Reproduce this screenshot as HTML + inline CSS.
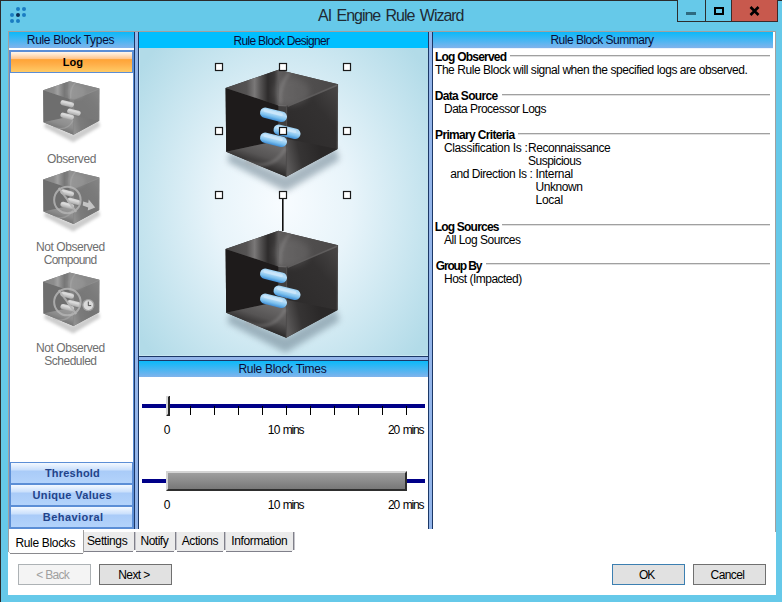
<!DOCTYPE html>
<html><head><meta charset="utf-8">
<style>
*{margin:0;padding:0;box-sizing:border-box}
html,body{width:782px;height:602px;overflow:hidden}
body{position:relative;background:#66C9E9;font-family:"Liberation Sans",sans-serif;font-size:11px;color:#000}
.a{position:absolute}
.t{position:absolute;white-space:nowrap;line-height:20px}
.hdr{position:absolute;height:16px;background:linear-gradient(#0BB9F9,#80B3EC)}
.navy{background:#1C3867}
.lt{background:#93B5EA}
.sep{position:absolute;height:2px;border-top:1px solid #A0A0A0;border-bottom:1px solid #E0E0E0}
.btn{position:absolute;height:21px;border:1px solid #707070;background:#E1E1E1;text-align:center;line-height:19px;font-size:11px}
.tab{position:absolute;top:532px;height:20px;background:#EBEBEB;border-right:2px solid #8A8A8E;border-bottom:1px solid #8A8A8E}
.bb{position:absolute;left:10px;width:123px;height:22px;border:1px solid #5B8ED6;background:linear-gradient(#F4F9FF 0%,#C9DFFC 35%,#A9CBF8 40%,#B3D3FB 100%);color:#29508F;font-weight:bold;text-align:center;line-height:20px}
</style></head><body>

<svg width="0" height="0" style="position:absolute">
<defs>
 <filter id="blur3" x="-30%" y="-30%" width="160%" height="160%"><feGaussianBlur stdDeviation="3"/></filter>
 <filter id="gray" x="-20%" y="-20%" width="140%" height="140%" color-interpolation-filters="sRGB"><feColorMatrix type="matrix" values="0.117 0.393 0.040 0 0.37 0.117 0.393 0.040 0 0.37 0.117 0.393 0.040 0 0.37 0 0 0 1 0"/></filter>
 <filter id="blur1" x="-30%" y="-30%" width="160%" height="160%"><feGaussianBlur stdDeviation="1.5"/></filter>
 <linearGradient id="gTopL" x1="0" y1="0" x2="1" y2="0">
  <stop offset="0" stop-color="#4A4848"/><stop offset="0.4" stop-color="#555353"/><stop offset="0.55" stop-color="#7A7878"/><stop offset="0.66" stop-color="#565454"/><stop offset="0.8" stop-color="#2E2C2C"/><stop offset="0.92" stop-color="#3A3838"/><stop offset="1" stop-color="#5A5858"/>
 </linearGradient>
 <linearGradient id="gTopR" x1="0" y1="0" x2="1" y2="0">
  <stop offset="0" stop-color="#5E5C5C"/><stop offset="0.35" stop-color="#525050"/><stop offset="1" stop-color="#4A4848"/>
 </linearGradient>
 <linearGradient id="gRight" gradientUnits="userSpaceOnUse" x1="62" y1="60" x2="110" y2="20">
  <stop offset="0" stop-color="#2E2C2C"/><stop offset="0.6" stop-color="#333131"/><stop offset="1" stop-color="#454343"/>
 </linearGradient>
 <linearGradient id="gFloorL" gradientUnits="userSpaceOnUse" x1="38" y1="72" x2="30" y2="96">
  <stop offset="0" stop-color="#6A6868"/><stop offset="0.55" stop-color="#565454"/><stop offset="1" stop-color="#2E2C2C"/>
 </linearGradient>
 <linearGradient id="gFloorR" gradientUnits="userSpaceOnUse" x1="61" y1="90" x2="95" y2="82">
  <stop offset="0" stop-color="#5A5858"/><stop offset="0.4" stop-color="#363434"/><stop offset="1" stop-color="#2A2828"/>
 </linearGradient>
 <linearGradient id="gPill" x1="0" y1="0" x2="0" y2="1">
  <stop offset="0" stop-color="#9ED2F4"/><stop offset="0.35" stop-color="#B8DEF8"/><stop offset="0.7" stop-color="#7CC0EE"/><stop offset="1" stop-color="#3F8ED6"/>
 </linearGradient>
 <g id="cubeD">
  <path d="M4 82 L60 106 L110 78 L114 90 L60 122 L2 92 Z" fill="#6A808E" opacity="0.55" filter="url(#blur3)"/>
  <path d="M52.8 0 L112.5 14.4 L112 79.3 L60.6 107 L0.6 82 L0 18.2 Z" fill="url(#gRight)"/>
  <path d="M0 18.2 L52.8 35.6 L52.8 69 L60.6 69 L0.6 82 Z" fill="#1E1B1B"/>
  <path d="M0 18.2 L52.8 0 L52.8 35.6 Z" fill="url(#gTopL)"/>
  <path d="M52.8 0 L112.5 14.4 L61.4 36 L52.8 35.6 Z" fill="url(#gTopR)"/>
  <path d="M0.6 82 L60.6 69 L60.6 107 Z" fill="url(#gFloorL)"/>
  <path d="M60.6 69 L112 79.3 L60.6 107 Z" fill="url(#gFloorR)"/>
  <ellipse cx="66" cy="22" rx="18" ry="14" fill="#8A8888" opacity="0.25" filter="url(#blur3)"/>
  <path d="M111.8 15 L111.6 79" stroke="#4E4C4C" stroke-width="1"/>
  <path d="M52.8 36 L61 36.5 L61 70 L52.8 69 Z" fill="#4E4C4C" opacity="0.6"/>
  <path d="M52.8 0.5 L52.8 35.6" stroke="#5E5C5C" stroke-width="1"/>
  <path d="M52.8 35.6 L61.4 36" stroke="#6A6868" stroke-width="1.2"/>
  <path d="M61 36 L60.8 107" stroke="#4E4C4C" stroke-width="1.2"/>
  <path d="M64 3 Q53 16 55 34" fill="none" stroke="#9A9898" stroke-width="3" opacity="0.35" filter="url(#blur1)"/>
  <path d="M20 92 Q48 102 60 78" fill="none" stroke="#9A9898" stroke-width="2.5" opacity="0.45" filter="url(#blur1)"/>
  <path d="M111.5 15.5 L62 36.5" stroke="#7A7878" stroke-width="1.5" opacity="0.55"/>
  <g transform="rotate(14 48 45)"><rect x="34.2" y="39.8" width="27.5" height="10.4" rx="5.2" fill="url(#gPill)"/><rect x="37" y="41" width="20" height="3.5" rx="1.7" fill="#E4F2FC" opacity="0.45"/></g>
  <g transform="rotate(14 61.5 62)"><rect x="47.7" y="56.8" width="27.5" height="10.4" rx="5.2" fill="url(#gPill)"/><rect x="50.5" y="58" width="20" height="3.5" rx="1.7" fill="#E4F2FC" opacity="0.45"/></g>
  <g transform="rotate(14 48 70)"><rect x="34.2" y="64.8" width="27.5" height="10.4" rx="5.2" fill="url(#gPill)"/><rect x="37" y="66" width="20" height="3.5" rx="1.7" fill="#E4F2FC" opacity="0.45"/></g>
 </g>
 <linearGradient id="iTopL" x1="0" y1="0" x2="1" y2="0">
  <stop offset="0" stop-color="#7A7A7A"/><stop offset="0.6" stop-color="#A0A0A0"/><stop offset="0.85" stop-color="#808080"/><stop offset="1" stop-color="#8A8A8A"/>
 </linearGradient>
 <g id="cubeI">
  <path d="M4 84 L60 108 L112 80 L114 94 L60 124 L2 96 Z" fill="#9A9A9A" opacity="0.6" filter="url(#blur3)"/>
  <path d="M0 18 L52.5 0 L112.5 14.4 L112 79.3 L60 106.7 L0.6 82 Z" fill="#858585"/>
  <path d="M0 18 L52.5 33.5 L60.5 35.7 L60 106.7 L0.6 82 Z" fill="#6E6E6E"/>
  <path d="M0 18 L52.5 0 L52.5 33.5 Z" fill="url(#iTopL)"/>
  <path d="M52.5 0 L112.5 14.4 L60.5 35.7 L52.5 33.5 Z" fill="#8C8C8C"/>
  <path d="M0.6 82 L60.5 66 L60 106.7 Z" fill="#8A8A8A"/>
  <path d="M60.5 66 L112 79.3 L60 106.7 Z" fill="#7C7C7C"/>
 </g>
 <g id="pillsI">
  <g transform="rotate(12 48 45)"><rect x="34" y="40" width="28" height="10" rx="5" fill="#C4C4C4"/></g>
  <g transform="rotate(12 62 62)"><rect x="48" y="57" width="28" height="10" rx="5" fill="#C4C4C4"/></g>
  <g transform="rotate(12 48 70)"><rect x="34" y="65" width="28" height="10" rx="5" fill="#C4C4C4"/></g>
 </g>
</defs></svg>

<!-- window frame lines -->
<div class="a" style="left:0;top:0;width:782px;height:1px;background:#2B2B2B"></div>
<div class="a" style="left:0;top:0;width:1px;height:602px;background:#2B2B2B"></div>
<!-- app icon -->
<svg class="a" style="left:0;top:0" width="40" height="30">
<g fill="#1A7CC2"><circle cx="18" cy="9" r="2"/><circle cx="24" cy="9" r="2"/><circle cx="12" cy="15" r="2"/><circle cx="24" cy="15" r="2"/><circle cx="12" cy="21" r="2"/><circle cx="18" cy="21" r="2"/></g>
<circle cx="18" cy="15" r="2" fill="#0B2F55"/>
</svg>
<!-- caption buttons -->
<div class="a" style="left:677px;top:0;width:101px;height:22px;border:1px solid #2D2D2D;border-top:none;background:#66C9E9"></div>
<div class="a" style="left:705px;top:0;width:1px;height:22px;background:#2D2D2D"></div>
<div class="a" style="left:731px;top:0;width:47px;height:22px;background:#C8594D;border:1px solid #3A2A2A;border-top:none"></div>
<div class="a" style="left:686px;top:12px;width:10px;height:3px;background:#2E6A80"></div>
<div class="a" style="left:714px;top:7px;width:10px;height:8px;border:2px solid #000"></div>
<svg class="a" style="left:749px;top:6px" width="11" height="10"><path d="M1.5 1 L9.5 9 M9.5 1 L1.5 9" stroke="#000" stroke-width="2.6"/></svg>

<!-- client -->
<div class="a" style="left:8px;top:31px;width:768px;height:564px;background:#fff"></div>
<div class="a" style="left:8px;top:31px;width:768px;height:1px;background:#A0A0A0"></div>
<div class="a" style="left:8px;top:31px;width:1px;height:521px;background:#A0A0A0"></div>
<div class="a" style="left:775px;top:31px;width:1px;height:501px;background:#A0A0A0"></div>

<!-- LEFT PANEL -->
<div class="hdr" style="left:9px;top:32px;width:125px"></div>
<div class="a" style="left:9px;top:50px;width:125px;height:479px;border:1px solid #5B8ED6;background:#fff"></div>
<div class="a" style="left:10px;top:51px;width:123px;height:22px;border:1px solid #5B8ED6;background:linear-gradient(#FFF6EC 0%,#FFE2C4 15%,#FFC68E 33%,#FFA436 38%,#FFAE48 60%,#FFCB66 100%)"></div>


<svg class="a" style="left:10px;top:73px" width="123" height="290">
 <g transform="translate(33.2 8.2) scale(0.5)" filter="url(#gray)"><use href="#cubeD"/></g>
 <g transform="translate(33.2 97.4) scale(0.5)"><g filter="url(#gray)"><use href="#cubeD"/></g>
   <circle cx="48.4" cy="59" r="26.5" fill="none" stroke="#B4B4B4" stroke-width="4" opacity="0.85"/><path d="M31 35 L66 83" stroke="#B4B4B4" stroke-width="4" opacity="0.85"/>
   <path d="M80 62 L90 65 L91 58 L104 74 L89 80 L90 74 L79 70 Z" fill="#C4C4C4"/></g>
 <g transform="translate(33.2 199.6) scale(0.5)"><g filter="url(#gray)"><use href="#cubeD"/></g>
   <circle cx="48.4" cy="59" r="26.5" fill="none" stroke="#B4B4B4" stroke-width="4" opacity="0.85"/><path d="M31 35 L66 83" stroke="#B4B4B4" stroke-width="4" opacity="0.85"/>
   <circle cx="90.2" cy="65" r="11" fill="#DADADA" stroke="#A0A0A0" stroke-width="2.5"/><path d="M90.2 58 L90.2 66 L96 66" stroke="#444" stroke-width="1.8" fill="none"/></g>
</svg>


<div class="bb" style="top:462px"></div>
<div class="bb" style="top:484px"></div>
<div class="bb" style="top:506px"></div>

<!-- splitter 1 -->
<div class="a navy" style="left:134px;top:32px;width:5px;height:497px"></div>
<div class="a lt" style="left:135px;top:32px;width:3px;height:497px"></div>

<!-- DESIGNER -->
<div class="a" style="left:139px;top:32px;width:289px;height:16px;background:#00BFFF"></div>
<div class="a" style="left:139px;top:48px;width:289px;height:308px;background:radial-gradient(ellipse 180px 220px at 144px 155px,#F8FCFF 0%,#E8F4FA 38%,#B2DBE8 100%)"></div>


<svg class="a" style="left:139px;top:48px" width="289" height="308">
 <use href="#cubeD" transform="translate(86.6 21.8)"/>
 <use href="#cubeD" transform="translate(86.6 182.8)"/>
 <rect x="143" y="147" width="1.6" height="36" fill="#111"/>
 <g fill="#fff" stroke="#1A1A1A" stroke-width="1.2">
  <rect x="76.5" y="15.5" width="7" height="7"/><rect x="140.5" y="15.5" width="7" height="7"/><rect x="204.5" y="15.5" width="7" height="7"/>
  <rect x="76.5" y="79.5" width="7" height="7"/><rect x="140.5" y="79.5" width="7" height="7"/><rect x="204.5" y="79.5" width="7" height="7"/>
  <rect x="76.5" y="143.5" width="7" height="7"/><rect x="140.5" y="143.5" width="7" height="7"/><rect x="204.5" y="143.5" width="7" height="7"/>
 </g>
</svg>

<div class="a" style="left:139px;top:48px;width:1px;height:308px;background:#C6E6F0"></div><div class="a" style="left:139px;top:355px;width:289px;height:1px;background:#C6E6F0"></div>
<!-- h splitter -->
<div class="a navy" style="left:139px;top:356px;width:289px;height:5px"></div>
<div class="a lt" style="left:139px;top:357px;width:289px;height:3px"></div>

<!-- TIMES -->
<div class="hdr" style="left:139px;top:361px;width:289px"></div>


<!-- times content -->
<div class="a" style="left:142px;top:404px;width:283px;height:4px;background:#000088"></div>
<svg class="a" style="left:139px;top:390px" width="289" height="30">
 <g stroke="#000" stroke-width="1"><path d="M51.5 16V25M75.5 16V25M99.5 16V25M123.5 16V25M147.5 16V25M171.5 16V25M195.5 16V25M219.5 16V25M243.5 16V25M267.5 16V25"/></g>
 <rect x="27" y="6" width="2" height="19" fill="#D6D6D6"/>
 <path d="M29 7 L30 6 L31 6 L31 26 L27 26 L29 24 Z" fill="#262626"/>
</svg>
<div class="a" style="left:142px;top:479px;width:283px;height:4px;background:#000088"></div>
<div class="a" style="left:166px;top:471px;width:241px;height:20px;background:linear-gradient(#9E9E9E,#787878);border-top:2px solid #D4D4D4;border-left:2px solid #D4D4D4;border-bottom:2px solid #2E2E2E;border-right:2px solid #2E2E2E"></div>

<!-- splitter 2 -->
<div class="a navy" style="left:428px;top:32px;width:5px;height:497px"></div>
<div class="a lt" style="left:429px;top:32px;width:3px;height:497px"></div>

<!-- SUMMARY -->
<div class="hdr" style="left:433px;top:32px;width:340px"></div><div class="a" style="left:433px;top:48px;width:340px;height:1px;background:#EEF3FB"></div>


<!-- summary content -->
<div class="sep" style="left:510px;top:55px;width:260px"></div>
<div class="sep" style="left:502px;top:94px;width:268px"></div>
<div class="sep" style="left:518px;top:133px;width:252px"></div>
<div class="sep" style="left:502px;top:224px;width:268px"></div>
<div class="sep" style="left:486px;top:263px;width:284px"></div>

<!-- TABS -->
<div class="a" style="left:8px;top:529px;width:1px;height:23px;background:#A0A0A0"></div>
<div class="a" style="left:83px;top:530px;width:1px;height:22px;background:#A0A0A0"></div>
<div class="a" style="left:10px;top:553px;width:73px;height:1px;background:#8A8A8E"></div><div class="a" style="left:9px;top:552px;width:1px;height:1px;background:#C8C8C8"></div><div class="a" style="left:83px;top:552px;width:1px;height:1px;background:#C8C8C8"></div>
<div class="a" style="left:84px;top:532px;width:50px;height:19px;background:#EBEBEB"></div><div class="a" style="left:134px;top:532px;width:1px;height:18px;background:#80808A"></div><div class="a" style="left:135px;top:532px;width:1px;height:18px;background:#C4C4CA"></div><div class="a" style="left:84px;top:551px;width:49px;height:1px;background:#80808A"></div>
<div class="a" style="left:136px;top:532px;width:39px;height:19px;background:#EBEBEB"></div><div class="a" style="left:175px;top:532px;width:1px;height:18px;background:#80808A"></div><div class="a" style="left:176px;top:532px;width:1px;height:18px;background:#C4C4CA"></div><div class="a" style="left:136px;top:551px;width:38px;height:1px;background:#80808A"></div>
<div class="a" style="left:177px;top:532px;width:47px;height:19px;background:#EBEBEB"></div><div class="a" style="left:224px;top:532px;width:1px;height:18px;background:#80808A"></div><div class="a" style="left:225px;top:532px;width:1px;height:18px;background:#C4C4CA"></div><div class="a" style="left:177px;top:551px;width:46px;height:1px;background:#80808A"></div>
<div class="a" style="left:226px;top:532px;width:67px;height:19px;background:#EBEBEB"></div><div class="a" style="left:293px;top:532px;width:1px;height:18px;background:#80808A"></div><div class="a" style="left:294px;top:532px;width:1px;height:18px;background:#C4C4CA"></div><div class="a" style="left:226px;top:551px;width:66px;height:1px;background:#80808A"></div>

<!-- BUTTONS -->
<div class="btn" style="left:18px;top:564px;width:73px;background:#F4F4F4;border-color:#ADB2B5;color:#A0A0A0"></div>
<div class="btn" style="left:99px;top:564px;width:73px"></div>
<div class="btn" style="left:612px;top:564px;width:73px;border-color:#3C7FB1"></div>
<div class="btn" style="left:693px;top:564px;width:73px"></div>
<div class="t" style="left:318.00px;top:6px;font-size:16px;color:#202A33;letter-spacing:-1.025px;word-spacing:2.0px">AI Engine Rule Wizard</div>
<div class="t" style="left:26.80px;top:30px;font-size:12px;color:#0A0D38;letter-spacing:-0.320px">Rule Block Types</div>
<div class="t" style="left:62.80px;top:52px;font-size:11px;color:#000;font-weight:bold;letter-spacing:-0.050px">Log</div>
<div class="t" style="left:233.40px;top:31px;font-size:12px;color:#0A0D38;letter-spacing:-0.667px">Rule Block Designer</div>
<div class="t" style="left:550.40px;top:30px;font-size:12px;color:#0A0D38;letter-spacing:-0.500px">Rule Block Summary</div>
<div class="t" style="left:238.40px;top:359px;font-size:12px;color:#0A0D38;letter-spacing:-0.293px">Rule Block Times</div>
<div class="t" style="left:46.90px;top:149px;font-size:12px;color:#6E6E6E;letter-spacing:-0.343px">Observed</div>
<div class="t" style="left:36.00px;top:237px;font-size:12px;color:#6E6E6E;letter-spacing:-0.436px">Not Observed</div>
<div class="t" style="left:43.80px;top:250px;font-size:12px;color:#6E6E6E;letter-spacing:-0.757px">Compound</div>
<div class="t" style="left:36.00px;top:338px;font-size:12px;color:#6E6E6E;letter-spacing:-0.436px">Not Observed</div>
<div class="t" style="left:44.30px;top:351px;font-size:12px;color:#6E6E6E;letter-spacing:-0.500px">Scheduled</div>
<div class="t" style="left:44.90px;top:463px;font-size:11px;color:#22438A;font-weight:bold;letter-spacing:0.219px">Threshold</div>
<div class="t" style="left:32.60px;top:485px;font-size:11px;color:#22438A;font-weight:bold;letter-spacing:0.317px">Unique Values</div>
<div class="t" style="left:42.80px;top:507px;font-size:11px;color:#22438A;font-weight:bold;letter-spacing:0.444px">Behavioral</div>
<div class="t" style="left:15.40px;top:533px;font-size:12px;color:#000;letter-spacing:-0.320px">Rule Blocks</div>
<div class="t" style="left:87.00px;top:531px;font-size:12px;color:#000;letter-spacing:-0.386px">Settings</div>
<div class="t" style="left:140.50px;top:531px;font-size:12px;color:#000;letter-spacing:-0.500px">Notify</div>
<div class="t" style="left:181.80px;top:531px;font-size:12px;color:#000;letter-spacing:-0.433px">Actions</div>
<div class="t" style="left:231.30px;top:531px;font-size:12px;color:#000;letter-spacing:-0.370px">Information</div>
<div class="t" style="left:36.20px;top:565px;font-size:12px;color:#A0A0A0;letter-spacing:-0.680px">&lt; Back</div>
<div class="t" style="left:118.30px;top:565px;font-size:12px;color:#000;letter-spacing:-0.620px">Next &gt;</div>
<div class="t" style="left:639.00px;top:565px;font-size:12px;color:#000;letter-spacing:-1.200px">OK</div>
<div class="t" style="left:710.60px;top:565px;font-size:12px;color:#000;letter-spacing:-0.600px">Cancel</div>
<div class="t" style="left:435.00px;top:47px;font-size:12px;color:#000;font-weight:bold;letter-spacing:-0.782px">Log Observed</div>
<div class="t" style="left:435.00px;top:60px;font-size:12px;color:#000;letter-spacing:-0.444px">The Rule Block will signal when the specified logs are observed.</div>
<div class="t" style="left:434.70px;top:86px;font-size:12px;color:#000;font-weight:bold;letter-spacing:-0.650px">Data Source</div>
<div class="t" style="left:444.00px;top:99px;font-size:12px;color:#000;letter-spacing:-0.533px">Data Processor Logs</div>
<div class="t" style="left:435.10px;top:125px;font-size:12px;color:#000;font-weight:bold;letter-spacing:-0.667px">Primary Criteria</div>
<div class="t" style="left:443.90px;top:138px;font-size:12px;color:#000;letter-spacing:-0.344px">Classification Is :</div>
<div class="t" style="left:528.00px;top:138px;font-size:12px;color:#000;letter-spacing:-0.469px">Reconnaissance</div>
<div class="t" style="left:528.00px;top:151px;font-size:12px;color:#000;letter-spacing:-0.511px">Suspicious</div>
<div class="t" style="left:450.20px;top:164px;font-size:12px;color:#000;letter-spacing:-0.435px">and Direction Is :</div>
<div class="t" style="left:535.50px;top:164px;font-size:12px;color:#000;letter-spacing:-0.329px">Internal</div>
<div class="t" style="left:535.50px;top:177px;font-size:12px;color:#000;letter-spacing:-0.417px">Unknown</div>
<div class="t" style="left:535.50px;top:190px;font-size:12px;color:#000;letter-spacing:-0.275px">Local</div>
<div class="t" style="left:434.70px;top:217px;font-size:12px;color:#000;font-weight:bold;letter-spacing:-0.790px">Log Sources</div>
<div class="t" style="left:444.00px;top:230px;font-size:12px;color:#000;letter-spacing:-0.500px">All Log Sources</div>
<div class="t" style="left:435.70px;top:256px;font-size:12px;color:#000;font-weight:bold;letter-spacing:-1.143px">Group By</div>
<div class="t" style="left:444.00px;top:269px;font-size:12px;color:#000;letter-spacing:-0.514px">Host (Impacted)</div>
<div class="t" style="left:163.80px;top:420px;font-size:12px;color:#000">0</div>
<div class="t" style="left:267.70px;top:420px;font-size:12px;color:#000;letter-spacing:-0.500px">10</div>
<div class="t" style="left:282.70px;top:420px;font-size:12px;color:#000;letter-spacing:-1.167px">mins</div>
<div class="t" style="left:387.90px;top:420px;font-size:12px;color:#000;letter-spacing:-1.000px">20</div>
<div class="t" style="left:402.70px;top:420px;font-size:12px;color:#000;letter-spacing:-1.133px">mins</div>
<div class="t" style="left:163.80px;top:495px;font-size:12px;color:#000">0</div>
<div class="t" style="left:267.70px;top:495px;font-size:12px;color:#000;letter-spacing:-0.500px">10</div>
<div class="t" style="left:282.70px;top:495px;font-size:12px;color:#000;letter-spacing:-1.167px">mins</div>
<div class="t" style="left:387.90px;top:495px;font-size:12px;color:#000;letter-spacing:-1.000px">20</div>
<div class="t" style="left:402.70px;top:495px;font-size:12px;color:#000;letter-spacing:-1.133px">mins</div>
</body></html>
